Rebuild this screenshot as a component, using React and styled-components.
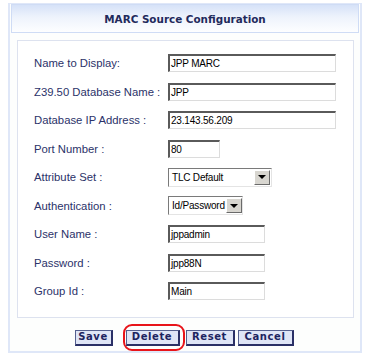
import React from 'react';
import styled, { createGlobalStyle } from 'styled-components';

const GlobalStyle = createGlobalStyle`
  body {
    margin: 0;
    background: #fff;
    font-family: "Liberation Sans", Arial, sans-serif;
  }
`;

const Frame = styled.div`
  width: 350px;
  margin: 3px 0 0 8px;
  border: 2px solid #dfe7f8;
  border-top-width: 1px;
  padding: 0 0 5px;
  background: #fdfefd;
`;

const Header = styled.div`
  margin: 0 1px;
  height: 27px;
  border: 1px solid #cfdcf5;
  background: linear-gradient(to bottom, #d6e2f8 0%, #eef3fc 45%, #fdfeff 100%);
  display: flex;
  align-items: center;
  justify-content: center;
  font-family: "DejaVu Sans", Verdana, sans-serif;
  font-weight: bold;
  font-size: 10.4px;
  color: #1f2a5c;
`;

const Box = styled.div`
  margin: 7px 6px 0 7px;
  border: 1px solid #dde2ef;
  background: #fff;
  padding: 8px 0 11px 16px;
  display: grid;
  grid-template-columns: 134px 1fr;
  grid-auto-rows: 28.5px;
  align-items: center;
`;

const Label = styled.div`
  font-size: 11.3px;
  color: #2b3269;
  white-space: nowrap;
`;

const Input = styled.div`
  box-sizing: border-box;
  width: ${p => p.$w}px;
  height: 18px;
  border: 2px solid;
  border-color: #5a5a5a #dcdcdc #dcdcdc #5a5a5a;
  border-width: 2px 1px 1px 2px;
  background: #fff;
  font-size: 10px;
  color: #000;
  line-height: 15px;
  padding-left: 1px;
  letter-spacing: -0.2px;
  white-space: nowrap;
  overflow: hidden;
`;

const Select = styled.div`
  box-sizing: border-box;
  width: ${p => p.$w}px;
  height: 19px;
  border: 1px solid;
  border-color: #7a7a7a #e4e4e4 #e4e4e4 #7a7a7a;
  background: #fff;
  display: flex;
  align-items: stretch;
  font-size: 10px;
  color: #000;
`;

const SelectText = styled.span`
  flex: 1;
  padding-left: 3px;
  line-height: 17px;
  white-space: nowrap;
  letter-spacing: -0.2px;
`;

const Arrow = styled.span`
  flex: none;
  width: 14px;
  margin: 1px;
  background: #d8d6d0;
  border: 1px solid;
  border-color: #fff #6a6a6a #6a6a6a #fff;
  display: flex;
  align-items: center;
  justify-content: center;
  &::after {
    content: "";
    border-left: 4px solid transparent;
    border-right: 4px solid transparent;
    border-top: 4px solid #000;
  }
`;

const Buttons = styled.div`
  display: flex;
  justify-content: center;
  align-items: center;
  margin-top: 12px;
  padding-left: 1px;
`;

const Button = styled.button`
  box-sizing: border-box;
  height: 16px;
  width: ${p => p.$w}px;
  padding: 0;
  margin: 0 ${p => p.$mr || 3}px 0 0;
  border: 1px solid;
  border-color: #55608f #2a3066 #2a3066 #55608f;
  border-width: 1px 2px 2px 1px;
  background: #dfe5f6;
  font-family: "DejaVu Sans", Verdana, sans-serif;
  font-weight: bold;
  font-size: 10px;
  letter-spacing: 0.6px;
  color: #1d2460;
  line-height: 12px;
`;

const Ring = styled.span`
  position: relative;
  display: inline-flex;
  margin: 0 3px 0 10px;
  &::before {
    content: "";
    position: absolute;
    left: -3px;
    right: -2px;
    top: -6px;
    bottom: -5px;
    border: 2px solid #e8141a;
    border-radius: 9px;
    pointer-events: none;
  }
`;

const fields = [
  ['Name to Display:', 'input', 168, 'JPP MARC'],
  ['Z39.50 Database Name :', 'input', 168, 'JPP'],
  ['Database IP Address :', 'input', 168, '23.143.56.209'],
  ['Port Number :', 'input', 52, '80'],
  ['Attribute Set :', 'select', 104, 'TLC Default'],
  ['Authentication :', 'select', 75, 'Id/Password'],
  ['User Name :', 'input', 97, 'jppadmin'],
  ['Password :', 'input', 97, 'jpp88N'],
  ['Group Id :', 'input', 97, 'Main'],
];

export default function App() {
  return (
    <>
      <GlobalStyle />
      <Frame>
        <Header>MARC Source Configuration</Header>
        <Box>
          {fields.map(([label, kind, w, value]) => (
            <React.Fragment key={label}>
              <Label>{label}</Label>
              {kind === 'input' ? (
                <Input $w={w}>{value}</Input>
              ) : (
                <Select $w={w}>
                  <SelectText>{value}</SelectText>
                  <Arrow />
                </Select>
              )}
            </React.Fragment>
          ))}
        </Box>
        <Buttons>
          <Button $w={38} $mr={0}>Save</Button>
          <Ring>
            <Button $w={54} $mr={0}>Delete</Button>
          </Ring>
          <Button $w={49}>Reset</Button>
          <Button $w={56} $mr={0}>Cancel</Button>
        </Buttons>
      </Frame>
    </>
  );
}
